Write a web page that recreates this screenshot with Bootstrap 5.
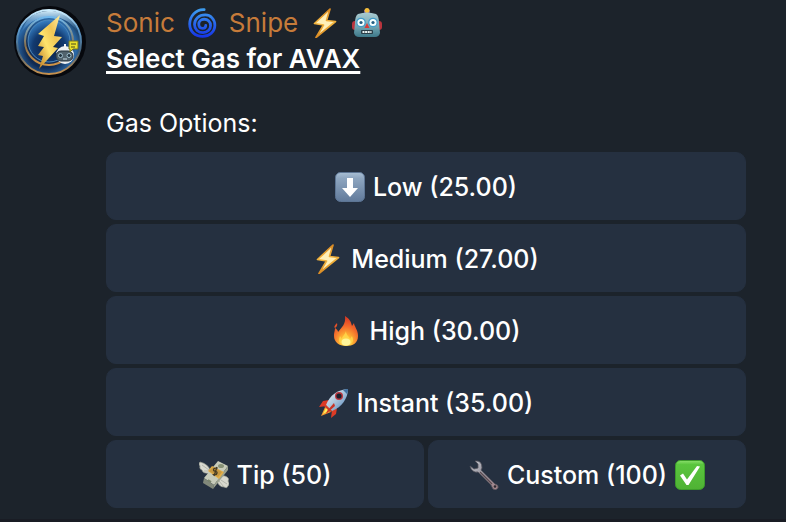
<!DOCTYPE html>
<html lang="en">
<head>
<meta charset="utf-8">
<meta name="viewport" content="width=device-width, initial-scale=1">
<title>Sonic Snipe</title>
<link href="https://cdn.jsdelivr.net/npm/bootstrap@5.3.0/dist/css/bootstrap.min.css" rel="stylesheet">
<style>
body { background: #1c232b; color: #fff; font-family: Inter, "Liberation Sans", sans-serif; font-size: 25px; line-height: 36px; }
.message { gap: 20px; padding: 5px 40px 11px 14px; border-bottom: 3px solid #191c24; }
.avatar { width: 72px; height: 72px; margin-top: 1px; }
.sender { color: #c67b3a; font-size: 26px; gap: 12px; }
.emoji { width: 30px; height: 30px; flex: none; }
.heading-line { font-size: 26px; line-height: 36px; font-weight: 600; text-decoration: underline; text-decoration-thickness: 3px; text-underline-offset: 3px; text-decoration-skip-ink: none; }
.options-label { margin: 28px 0 11px; }
.keyboard { gap: 4px; }
.key { --bs-btn-color: #fff; --bs-btn-bg: #253040; --bs-btn-border-color: #253040; --bs-btn-hover-color: #fff; --bs-btn-hover-bg: #2e3a4d; --bs-btn-hover-border-color: #2e3a4d; --bs-btn-active-color: #fff; --bs-btn-active-bg: #35435a; --bs-btn-border-radius: 10px; --bs-btn-font-size: 25px; --bs-btn-font-weight: 500; --bs-btn-line-height: 36px; padding-top: 16px; padding-bottom: 14px; gap: 8px; flex: 1 1 0; }
</style>
<script src="https://cdn.jsdelivr.net/npm/bootstrap@5.3.0/dist/js/bootstrap.bundle.min.js" defer></script>
</head>
<body>
<svg width="0" height="0" class="position-absolute" aria-hidden="true">
<defs>
<linearGradient id="gold" x1="0" y1="0" x2="0" y2="1"><stop offset="0" stop-color="#d98a24"/><stop offset=".5" stop-color="#f4b53d"/><stop offset="1" stop-color="#d98a24"/></linearGradient>
<linearGradient id="swirl" x1="0" y1="0" x2="0" y2="1"><stop offset="0" stop-color="#3d9bee"/><stop offset="1" stop-color="#1637e8"/></linearGradient>
<linearGradient id="steel" x1="0" y1="0" x2="0" y2="1"><stop offset="0" stop-color="#a9cbd2"/><stop offset=".6" stop-color="#6fa3b0"/><stop offset="1" stop-color="#3d7889"/></linearGradient>
<linearGradient id="slate" x1="0" y1="0" x2="0" y2="1"><stop offset="0" stop-color="#a9bfd4"/><stop offset=".2" stop-color="#8ea6c0"/><stop offset="1" stop-color="#617a9b"/></linearGradient>
<linearGradient id="green" x1="0" y1="0" x2="0" y2="1"><stop offset="0" stop-color="#8be06c"/><stop offset=".14" stop-color="#5ac53e"/><stop offset="1" stop-color="#4fb234"/></linearGradient>
<radialGradient id="flame" cx=".5" cy=".9" r=".85"><stop offset="0" stop-color="#fff36b"/><stop offset=".3" stop-color="#ffb433"/><stop offset=".65" stop-color="#f36b2c"/><stop offset="1" stop-color="#d93a24"/></radialGradient>
<linearGradient id="hull" x1="0" y1="0" x2="1" y2="1"><stop offset="0" stop-color="#f4f8fb"/><stop offset=".5" stop-color="#a9c3da"/><stop offset="1" stop-color="#477dbb"/></linearGradient>
<linearGradient id="tool" x1="0" y1="0" x2="1" y2="1"><stop offset="0" stop-color="#c8ccd4"/><stop offset=".5" stop-color="#8f8b95"/><stop offset="1" stop-color="#a9858a"/></linearGradient>
<symbol id="i-bolt" viewBox="0 0 30 30"><path d="M20 1 4.500 15.500l9 1.500L6 29.500 25.500 13.500l-9-1z" fill="#fff0b8" stroke="url(#gold)" stroke-width="1.700" stroke-linejoin="round"/></symbol>
</defs>
</svg>
<main class="message d-flex align-items-start">
  <svg class="avatar flex-shrink-0" viewBox="0 0 72 72" role="img" aria-label="Sonic Snipe avatar">
    <defs>
      <radialGradient id="orb" cx=".45" cy=".6" r=".6"><stop offset="0" stop-color="#123a70"/><stop offset=".5" stop-color="#102950"/><stop offset=".78" stop-color="#2c6aa8"/><stop offset="1" stop-color="#163657"/></radialGradient>
      <linearGradient id="ring" x1="0" y1="0" x2="0" y2="1"><stop offset="0" stop-color="#cfefff"/><stop offset=".3" stop-color="#5d9bce"/><stop offset=".65" stop-color="#456178"/><stop offset="1" stop-color="#c8914d"/></linearGradient>
      <linearGradient id="inner" x1="0" y1="0" x2="0" y2="1"><stop offset="0" stop-color="#70b9ef"/><stop offset=".6" stop-color="#87714f"/><stop offset="1" stop-color="#d19445"/></linearGradient>
      <linearGradient id="shine" x1="0" y1="0" x2="0" y2="1"><stop offset="0" stop-color="#d9f3ff" stop-opacity=".95"/><stop offset="1" stop-color="#6db4ee" stop-opacity="0"/></linearGradient>
      <radialGradient id="core" cx=".5" cy=".65" r=".7"><stop offset="0" stop-color="#0c1c3c"/><stop offset=".55" stop-color="#123a70"/><stop offset="1" stop-color="#3f8fd6"/></radialGradient>
      <linearGradient id="strike" x1="1" y1="0" x2="0" y2="1"><stop offset="0" stop-color="#fff3ad"/><stop offset=".35" stop-color="#f0c555"/><stop offset=".6" stop-color="#ffe36c"/><stop offset="1" stop-color="#b8741f"/></linearGradient>
    </defs>
    <circle cx="36" cy="36" r="36" fill="#06080d"/>
    <circle cx="35" cy="36" r="32" fill="url(#orb)" stroke="url(#ring)" stroke-width="2"/>
    <path d="M8 26C12 9 25 5 36 5s24 5 28 21C55 13 45 11 36 11S17 13 8 26" fill="url(#shine)"/>
    <circle cx="35" cy="35" r="24" fill="none" stroke="url(#inner)" stroke-width="2"/>
    <circle cx="35" cy="35" r="21" fill="url(#core)" stroke="#4d89bd" stroke-width="1"/>
    <path d="M46 9 24 28l6 2-6 10 6 1-6 8 5 1-4 13 19-21-5-1 9-10-8-1z" fill="url(#strike)"/>
    <circle cx="51" cy="49" r="9" fill="#eef1f3"/>
    <path d="M51 38v4" stroke="#f4f4f4" stroke-width="2"/>
    <rect x="42" y="45" width="17" height="10" rx="5" fill="#52636d" stroke="#25323d"/>
    <circle cx="46.500" cy="49.500" r="2" fill="#243541" stroke="#a1c1d0"/><circle cx="55" cy="49.500" r="2" fill="#243541" stroke="#a1c1d0"/>
    <path d="M49 53h4" stroke="#c8dce5"/>
    <path d="M55 35h9v8h-5l-3 3v-3h-1z" fill="#e8e12b" stroke="#77751e"/><path d="M57 38h5m-5 3h4" stroke="#4a4a1c"/>
  </svg>
  <section class="flex-grow-1">
    <div class="sender d-flex align-items-center">
      <span>Sonic</span>
      <svg class="emoji" viewBox="1 0 26 28" role="img" aria-label="Cyclone"><path d="M16 1.500C8 1 2.500 8 2.500 15c0 7 5 11.500 12 11.500C21 26.500 26 22 26 16c0-5.500-4-9.500-9-9.500-6 0-10 4-10 9 0 4.500 3.500 7.500 8 7.500 4 0 7-3 7-6.500s-2.500-6-6-6c-3 0-5 2-5 4.500s1.500 4 3.500 4c2 0 3-1.200 3-2.700" fill="none" stroke="url(#swirl)" stroke-width="2.600" stroke-linecap="round"/></svg>
      <span>Snipe</span>
      <svg class="emoji" role="img" aria-label="Lightning"><use href="#i-bolt"/></svg>
      <svg class="emoji" viewBox="0 0 30 30" role="img" aria-label="Robot">
        <rect x="0" y="13" width="30" height="9" rx="3" fill="#b9343d"/><rect x="12" y="2" width="6" height="5" fill="#6357a7"/><circle cx="15" cy="2.500" r="2.500" fill="#f5bd3b"/>
        <path d="M6 6q9-3 18 0 3 2 3 9l1 10q-1 4-5 4H7q-4 0-5-4l1-10q0-7 3-9" fill="url(#steel)"/>
        <circle cx="9" cy="14.500" r="4.200" fill="#f4ffff" stroke="#439cc9" stroke-width="1.300"/><circle cx="21" cy="14.500" r="4.200" fill="#f4ffff" stroke="#439cc9" stroke-width="1.300"/><circle cx="9" cy="14.500" r="1.600" fill="#245e82"/><circle cx="21" cy="14.500" r="1.600" fill="#245e82"/>
        <path d="m15 15 2.500 5h-5z" fill="#d83b39"/><rect x="9" y="22" width="12" height="4" rx="1" fill="#293e48"/><path d="M10.500 24h9" stroke="#e9f3f2" stroke-width="2" stroke-dasharray="2 .6"/>
      </svg>
    </div>
    <h1 class="heading-line mb-0">Select Gas for AVAX</h1>
    <p class="options-label">Gas Options:</p>
    <div class="keyboard d-flex flex-column">
      <button type="button" class="btn key d-flex align-items-center justify-content-center">
        <svg class="emoji" viewBox="0 0 30 30" aria-hidden="true"><rect x=".5" y=".5" width="29" height="29" rx="5" fill="url(#slate)" stroke="#5d7594"/><path d="M12 6h6v10h5l-8 9-8-9h5z" fill="#fff"/></svg>
        <span>Low (25.00)</span></button>
      <button type="button" class="btn key d-flex align-items-center justify-content-center">
        <svg class="emoji" aria-hidden="true"><use href="#i-bolt"/></svg>
        <span>Medium (27.00)</span></button>
      <button type="button" class="btn key d-flex align-items-center justify-content-center">
        <svg class="emoji" viewBox="0 0 30 30" aria-hidden="true"><path d="M13 0c5 3 6 6 7 10l2-3c0 3 4 7 4 13 0 7-5 10-12 10S2 26 2 20c0-4 1-5 1-8 2 1 3 3 3 4 4-5 8-8 7-16M5 7q-4 4-2 5 3-2 2-5" fill="url(#flame)"/><path d="M14 15c0 4 3 5 4 8l2-3c3 6-1 9.500-6 9.500S5 26 8 20l2 3c0-3 3-4 4-8" fill="#ffd94b" opacity=".8"/><ellipse cx="14" cy="26" rx="4.500" ry="3.500" fill="#fff59a"/></svg>
        <span>High (30.00)</span></button>
      <button type="button" class="btn key d-flex align-items-center justify-content-center">
        <svg class="emoji" viewBox="0 0 30 30" aria-hidden="true"><path d="m10 12-6 1-4 6 8-1zm8 8-1 6-5 4 1-8z" fill="#dd3b25"/><path d="m7 17-5 11 10-4 2-4z" fill="#f59b2d"/><path d="m8 18-4 8 7-4z" fill="#fff05b"/><path d="M7 17C11 7 18 2 29 1c0 9-6 18-16 22z" fill="url(#hull)"/><path d="m7 17 6 6-2 1-6-6z" fill="#cf3b2b"/><path d="M24 2q3-1 5-1 0 3-1 5z" fill="#3f6fa0"/><circle cx="20" cy="8" r="4" fill="#b9363e"/><circle cx="20" cy="8" r="2.600" fill="#18202e"/><path d="m15 15-7 8-1 3 9-8z" fill="#c93527"/></svg>
        <span>Instant (35.00)</span></button>
      <div class="keyboard d-flex">
        <button type="button" class="btn key d-flex align-items-center justify-content-center">
          <svg class="emoji" viewBox="0 0 30 30" aria-hidden="true"><path d="M11 10Q9 4 1 2q-2 2 0 4-1 3 2 4 1 4 8 3zM20 18q2-3 6-2 5 2 3 5 2 3 0 5-1 3-4 1-5 0-7-6z" fill="#d9d9cf" stroke="#999d92" stroke-width=".7"/><path d="m3 5 7 5m-5 1 5 0m12 9 6 4m-8-3 5 6" stroke="#a9aca2" stroke-width=".8"/><path d="m5 18 14-17 10 5-14 19z" fill="#c7cbb9"/><path d="m5 18 10 7-1 4-10-6z" fill="#81887a"/><path d="m15 25 14-19v4L14 29z" fill="#9ca28e"/><ellipse cx="22" cy="6" rx="3" ry="2" fill="#879176"/><path d="m9 20 3 2" stroke="#7b866d" stroke-width="2"/><path d="m9 11 4-5 12 6-5 7z" fill="#e3af48"/><path d="m10 11 4-4 9 5-4 5z" fill="#c79942"/><path d="M18.500 8.500q-4-1-4 1.500c0 2 4 .5 3.500 3s-4 2-4 1M18 7l-3 9" fill="none" stroke="#443a23" stroke-width="1.300"/></svg>
          <span>Tip (50)</span></button>
        <button type="button" class="btn key d-flex align-items-center justify-content-center">
          <svg class="emoji" viewBox="0 0 30 30" aria-hidden="true"><path d="M6 1q7-1 7 7l-1 2 14 14q4 1 3 4-2 3-5 1l-2-4L9 12q-6 1-8-6l4 3 4-1V4z" fill="url(#tool)" stroke="#56545d" stroke-width=".8" stroke-linejoin="round"/><path d="m11 12 12 12" stroke="#5a4b51" stroke-width="1.300"/><circle cx="26" cy="26.500" r="1.300" fill="#2d2930"/></svg>
          <span>Custom (100)</span>
          <svg class="emoji" viewBox="0 0 30 30" role="img" aria-label="Selected"><rect x=".5" y=".5" width="29" height="29" rx="5" fill="url(#green)" stroke="#3c9b2b"/><path d="m5 15.500 3-2 4 6L22 6l3 .5L13.500 25h-2z" fill="#fff"/></svg>
        </button>
      </div>
    </div>
  </section>
</main>
</body>
</html>
